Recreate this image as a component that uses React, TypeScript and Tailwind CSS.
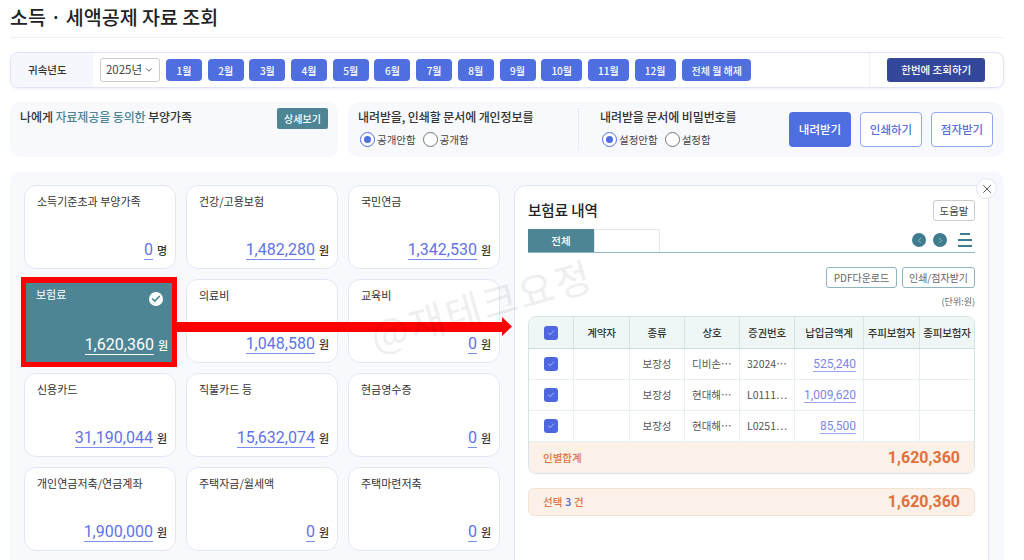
import { ChevronDown, ChevronLeft, ChevronRight, Check, X } from "lucide-react";

const MONTHS = ["1월", "2월", "3월", "4월", "5월", "6월", "7월", "8월", "9월"];
const MONTHS_WIDE = ["10월", "11월", "12월"];

const CARDS = [
  { label: "소득기준초과 부양가족", value: "0", unit: "명" },
  { label: "건강/고용보험", value: "1,482,280", unit: "원" },
  { label: "국민연금", value: "1,342,530", unit: "원" },
  { label: "보험료", value: "1,620,360", unit: "원", active: true },
  { label: "의료비", value: "1,048,580", unit: "원" },
  { label: "교육비", value: "0", unit: "원" },
  { label: "신용카드", value: "31,190,044", unit: "원" },
  { label: "직불카드 등", value: "15,632,074", unit: "원" },
  { label: "현금영수증", value: "0", unit: "원" },
  { label: "개인연금저축/연금계좌", value: "1,900,000", unit: "원" },
  { label: "주택자금/월세액", value: "0", unit: "원" },
  { label: "주택마련저축", value: "0", unit: "원" },
];

const HEADERS = ["계약자", "종류", "상호", "증권번호", "납입금액계", "주피보험자", "종피보험자"];

const ROWS = [
  { company: "디비손…", policy: "32024…", amount: "525,240" },
  { company: "현대해…", policy: "L0111…", amount: "1,009,620" },
  { company: "현대해…", policy: "L0251…", amount: "85,500" },
];

const GRID = "grid grid-cols-[44px_56px_55px_55px_55px_69px_56px_55px]";

function Radio({ label, checked }: { label: string; checked?: boolean }) {
  return (
    <span className="flex items-center gap-[2px] text-[10.5px] text-[#444]">
      {checked ? (
        <span className="flex h-[15px] w-[15px] items-center justify-center rounded-full border border-[#4f6ee0] bg-white">
          <span className="h-[7px] w-[7px] rounded-full bg-[#4f6ee0]" />
        </span>
      ) : (
        <span className="h-[15px] w-[15px] rounded-full border border-[#777] bg-white" />
      )}
      {label}
    </span>
  );
}

function Checkbox() {
  return (
    <span className="flex h-[14px] w-[14px] items-center justify-center rounded-[3px] bg-[#4f67de]">
      <Check className="h-[8px] w-[8px] text-[#dfe4fb]" strokeWidth={2} />
    </span>
  );
}

function Card({ label, value, unit, active }: { label: string; value: string; unit: string; active?: boolean }) {
  return (
    <div
      className={
        active
          ? "relative flex h-[84px] flex-col justify-between bg-[#4e8595] pb-[8px] pl-[12px] pr-[8px] pt-[6px] text-white"
          : "flex h-[84px] flex-col justify-between rounded-[12px] border border-[#e2e7f6] bg-white pb-[8px] pl-[12px] pr-[8px] pt-[6px]"
      }
    >
      <div className={active ? "text-[11px] leading-[18px] text-white" : "text-[11px] leading-[18px] text-[#333]"}>{label}</div>
      {active && (
        <>
          <span className="absolute -left-[3px] -top-[2px] h-[90px] w-[156px] border-[5px] border-t-[6px] border-[#f00]" />
          <span className="absolute right-[13px] top-[13px] flex h-[14px] w-[14px] items-center justify-center rounded-full bg-white">
            <Check className="h-[10px] w-[10px] text-[#4e8595]" strokeWidth={4} />
          </span>
        </>
      )}
      <div className="flex items-baseline justify-end gap-[4px]">
        <span
          className={
            active
              ? "border-b border-white font-['Roboto',sans-serif] text-[16px] leading-[19px] text-white"
              : "border-b border-[#7b90ee] font-['Roboto',sans-serif] text-[16px] leading-[19px] text-[#5f73e6]"
          }
        >
          {value}
        </span>
        <span className={active ? "text-[11px] font-medium text-white" : "text-[11px] font-medium text-[#333]"}>{unit}</span>
      </div>
    </div>
  );
}

export default function App() {
  return (
    <div className="relative h-[560px] w-[1024px] overflow-hidden bg-white font-['Noto_Sans_CJK_KR','Noto_Sans',sans-serif] text-[#222]">
      <div className="w-[1014px] pl-[10px] pr-[10px]">
        <h1 className="h-[38px] border-b border-[#eeeff3] pt-[2px] text-[19.5px] font-medium leading-[30px] text-[#222]">
          소득 · 세액공제 자료 조회
        </h1>

        {/* 귀속년도 */}
        <div className="mt-[14px] flex h-[36px] w-[994px] items-center overflow-hidden rounded-[8px] border border-[#dfe4f7] shadow-[0_1px_3px_#eef0fa]">
          <div className="flex h-full w-[82px] items-center bg-[#f6f7fd] pl-[17px] text-[10.5px] font-medium text-[#333]">귀속년도</div>
          <div className="ml-[7px] flex h-[24px] w-[60px] items-center justify-center gap-[2px] rounded-[3px] border border-[#ccc] text-[11.5px] text-[#444]">
            2025년 <ChevronDown className="h-[10px] w-[10px]" />
          </div>
          <div className="ml-[6px] flex gap-[5.7px]">
            {MONTHS.map((m) => (
              <span key={m} className="flex h-[22px] w-[36px] items-center justify-center rounded-[4px] bg-[#4f6ee0] text-[10px] font-medium text-white">{m}</span>
            ))}
            {MONTHS_WIDE.map((m) => (
              <span key={m} className="flex h-[22px] w-[41px] items-center justify-center rounded-[4px] bg-[#4f6ee0] text-[10px] font-medium text-white">{m}</span>
            ))}
            <span className="ml-[1px] flex h-[22px] w-[69px] items-center justify-center rounded-[4px] bg-[#4f6ee0] text-[10px] font-medium text-white">전체 월 해제</span>
          </div>
          <div className="ml-[118px] flex h-full items-center border-l border-dotted border-[#dfe4f7] pl-[17px]">
            <span className="flex h-[24px] w-[98px] items-center justify-center rounded-[3px] bg-[#34489b] text-[10.5px] font-medium text-white">한번에 조회하기</span>
          </div>
        </div>

        {/* 부양가족 / 내려받기 옵션 */}
        <div className="mt-[14px] flex gap-[10px]">
          <div className="flex h-[55px] w-[328px] items-start justify-between rounded-[10px] bg-[#f8f9fd] pl-[10px] pr-[10px] pt-[6px]">
            <div className="text-[12px] font-medium leading-[18px] tracking-[-0.1px] text-[#333]">
              나에게 <span className="text-[#4e8595]">자료제공을 동의한</span> 부양가족
            </div>
            <span className="flex h-[21px] w-[51px] items-center justify-center rounded-[2px] bg-[#4e8595] text-[10px] font-medium text-white">상세보기</span>
          </div>
          <div className="flex h-[55px] w-[656px] items-center rounded-[10px] bg-[#f8f9fd] pl-[10px]">
            <div className="w-[220px] self-start pt-[6px]">
              <div className="text-[12px] font-medium leading-[18px] tracking-[-0.1px] text-[#333]">내려받을, 인쇄할 문서에 개인정보를</div>
              <div className="ml-[2px] mt-[6px] flex gap-[7px]">
                <Radio label="공개안함" checked />
                <Radio label="공개함" />
              </div>
            </div>
            <div className="mt-[6px] h-[42px] w-[211px] self-start border-l border-dotted border-[#d5daf0] pl-[21px]">
              <div className="text-[12px] font-medium leading-[18px] tracking-[-0.1px] text-[#333]">내려받을 문서에 비밀번호를</div>
              <div className="ml-[2px] mt-[6px] flex gap-[7px]">
                <Radio label="설정안함" checked />
                <Radio label="설정함" />
              </div>
            </div>
            <div className="flex gap-[9px]">
              <span className="flex h-[35px] w-[62px] items-center justify-center rounded-[4px] bg-[#4f6ee0] text-[11.5px] font-medium text-white">내려받기</span>
              <span className="flex h-[35px] w-[62px] items-center justify-center rounded-[4px] border border-[#93a6ee] bg-white text-[11.5px] font-medium text-[#5a6fd8]">인쇄하기</span>
              <span className="flex h-[35px] w-[62px] items-center justify-center rounded-[4px] border border-[#93a6ee] bg-white text-[11.5px] font-medium text-[#5a6fd8]">점자받기</span>
            </div>
          </div>
        </div>

        {/* 본문 */}
        <div className="mt-[15px] flex h-[400px] w-[994px] gap-[15px] rounded-[10px] bg-[#f8f9fd] pl-[14px] pt-[13px]">
          <div className="grid h-fit w-[475px] grid-cols-[152px_152px_152px] gap-x-[10px] gap-y-[10px]">
            {CARDS.map((c) => (
              <Card key={c.label} {...c} />
            ))}
          </div>

          <div className="relative h-[400px] w-[475px] rounded-t-[12px] border border-[#dfe4f7] bg-white pl-[13px] pr-[13px] pt-[14px]">
            <span className="absolute -right-[9px] -top-[8px] flex h-[21px] w-[21px] items-center justify-center rounded-full border border-[#dfe4f7] bg-white">
              <X className="h-[14px] w-[14px] text-[#444]" strokeWidth={1.5} />
            </span>

            <div className="flex h-[21px] items-center justify-between">
              <div className="pb-[1px] text-[14.5px] font-medium leading-[20px] text-[#222]">보험료 내역</div>
              <span className="flex h-[21px] w-[42px] items-center justify-center rounded-[3px] border border-[#ccc] text-[10.5px] text-[#444]">도움말</span>
            </div>

            <div className="mt-[8px] flex h-[24px] items-stretch border-b border-[#8fb4bf]">
              <span className="flex w-[66px] items-center justify-center bg-[#4e8595] text-[10.5px] font-medium text-white">전체</span>
              <span className="w-[66px] border border-b-0 border-[#e6e6e6] bg-white" />
              <div className="ml-auto flex items-center gap-[7px] pb-[1px] pr-[3px]">
                <span className="flex h-[14px] w-[14px] items-center justify-center rounded-full bg-[#3f7d8e]">
                  <ChevronLeft className="h-[9px] w-[9px] text-[#a9cbd4]" />
                </span>
                <span className="flex h-[14px] w-[14px] items-center justify-center rounded-full bg-[#3f7d8e]">
                  <ChevronRight className="h-[9px] w-[9px] text-[#a9cbd4]" />
                </span>
                <span className="ml-[4px] flex w-[14px] flex-col gap-[4.5px]">
                  <span className="mx-auto h-[1.5px] w-[10px] bg-[#3f7d8e]" />
                  <span className="h-[1.5px] w-[14px] bg-[#3f7d8e]" />
                  <span className="h-[1.5px] w-[14px] bg-[#3f7d8e]" />
                </span>
              </div>
            </div>

            <div className="mt-[14px] flex justify-end gap-[5px]">
              <span className="flex h-[21px] w-[71px] items-center justify-center rounded-[3px] border border-[#8fb4bf] text-[10px] text-[#666]">PDF다운로드</span>
              <span className="flex h-[21px] w-[73px] items-center justify-center rounded-[3px] border border-[#8fb4bf] text-[10px] text-[#666]">인쇄/점자받기</span>
            </div>
            <div className="mt-[7px] text-right text-[9px] leading-[14px] text-[#666]">(단위:원)</div>

            <div className="mt-[7px] w-[447px] overflow-hidden rounded-[8px] border border-[#d5e3e6]">
              <div className={`${GRID} h-[32px] border-b border-[#cfe0e4] bg-[#eff6f6]`}>
                <span className="flex items-center justify-center">
                  <Checkbox />
                </span>
                {HEADERS.map((h) => (
                  <span key={h} className="flex items-center justify-center border-l border-[#d5e3e6] text-[10.5px] font-medium tracking-[-0.2px] text-[#333]">{h}</span>
                ))}
              </div>
              {ROWS.map((r) => (
                <div key={r.policy} className={`${GRID} h-[31px] border-b border-[#e6f0f2] bg-white text-[10.5px] text-[#555]`}>
                  <span className="flex items-center justify-center">
                    <Checkbox />
                  </span>
                  <span className="border-l border-[#e6f0f2]" />
                  <span className="flex items-center justify-center border-l border-[#e6f0f2]">보장성</span>
                  <span className="flex items-center border-l border-[#e6f0f2] pl-[7px]">{r.company}</span>
                  <span className="flex items-center border-l border-[#e6f0f2] pl-[7px]">{r.policy}</span>
                  <span className="flex items-center justify-end border-l border-[#e6f0f2] pr-[7px]">
                    <span className="border-b border-[#9aa5f0] font-['Roboto',sans-serif] text-[12px] leading-[14px] text-[#7b86e8]">{r.amount}</span>
                  </span>
                  <span className="border-l border-[#e6f0f2]" />
                  <span className="border-l border-[#e6f0f2]" />
                </div>
              ))}
              <div className="flex h-[31px] items-center justify-between bg-[#fbf1e8] pl-[14px] pr-[14px]">
                <span className="text-[10.5px] font-medium text-[#e0734a]">인별합계</span>
                <span className="font-['Roboto',sans-serif] text-[16px] font-bold text-[#e0703c]">1,620,360</span>
              </div>
            </div>

            <div className="mt-[14px] flex h-[28px] w-[447px] items-center justify-between rounded-[6px] border border-[#f5e3d3] bg-[#fbf1e8] pl-[14px] pr-[14px]">
              <span className="text-[10.5px] font-medium tracking-[0.2px] text-[#e0734a]">
                선택 <span className="text-[#4f67de]">3</span> 건
              </span>
              <span className="font-['Roboto',sans-serif] text-[16px] font-bold text-[#e0703c]">1,620,360</span>
            </div>
          </div>
        </div>
      </div>

      {/* 화살표 */}
      <div className="absolute left-[177px] top-[317px] flex h-[19px] items-center">
        <div className="h-[10px] w-[325px] bg-[#f00]" />
        <svg width="10" height="19" viewBox="0 0 10 19" className="block">
          <polygon points="0,0 10,9.5 0,19" fill="#f00" />
        </svg>
      </div>

      {/* 워터마크 */}
      <div className="pointer-events-none absolute left-[366px] top-[277px] -rotate-[16deg] text-[39px] font-medium leading-[54px] tracking-[2px] text-[#000]/[0.06]">
        @재테크요정
      </div>
    </div>
  );
}
